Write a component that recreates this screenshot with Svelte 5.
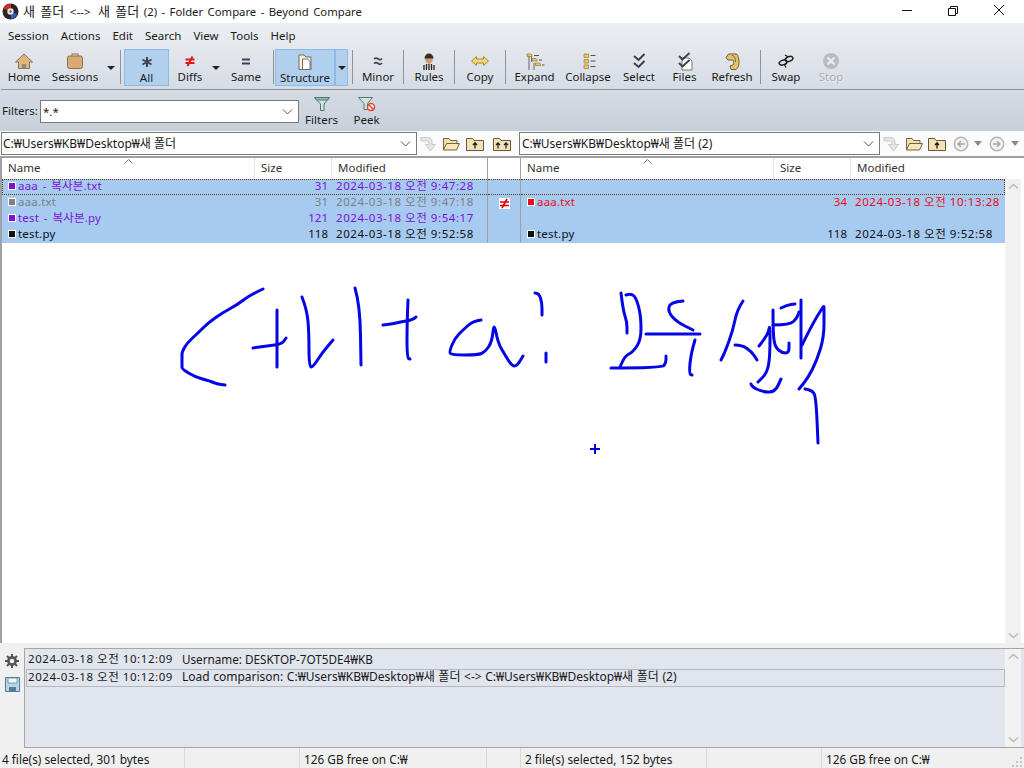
<script>
  const won = '\u20A9';
  const leftPath = `C:${won}Users${won}KB${won}Desktop${won}새 폴더`;
  const rightPath = `C:${won}Users${won}KB${won}Desktop${won}새 폴더 (2)`;

  const menus = ['Session', 'Actions', 'Edit', 'Search', 'View', 'Tools', 'Help'];

  const tools = [
    { label: 'Home', w: 42, icon: 'home' },
    { label: 'Sessions', w: 60, icon: 'case' },
    { arrow: 11 },
    { sep: 8 },
    { label: 'All', w: 45, icon: 'all', on: true },
    { label: 'Diffs', w: 42, icon: 'diffs' },
    { arrow: 10 },
    { label: 'Same', w: 50, icon: 'same' },
    { sep: 4 },
    { label: 'Structure', w: 60, icon: 'structure', on: true },
    { arrow: 13, on: true },
    { sep: 9 },
    { label: 'Minor', w: 42, icon: 'minor' },
    { sep: 9 },
    { label: 'Rules', w: 42, icon: 'rules' },
    { sep: 9 },
    { label: 'Copy', w: 42, icon: 'copy' },
    { sep: 9 },
    { label: 'Expand', w: 49, icon: 'expand' },
    { label: 'Collapse', w: 58, icon: 'collapse' },
    { label: 'Select', w: 44, icon: 'select' },
    { label: 'Files', w: 47, icon: 'files' },
    { label: 'Refresh', w: 48, icon: 'refresh' },
    { sep: 9 },
    { label: 'Swap', w: 42, icon: 'swap' },
    { label: 'Stop', w: 48, icon: 'stop', off: true }
  ];

  const leftRows = [
    { name: 'aaa - 복사본.txt', size: '31', date: '2024-03-18 오전 9:47:28', tone: 'orphan' },
    { name: 'aaa.txt', size: '31', date: '2024-03-18 오전 9:47:18', tone: 'older' },
    { name: 'test - 복사본.py', size: '121', date: '2024-03-18 오전 9:54:17', tone: 'orphan' },
    { name: 'test.py', size: '118', date: '2024-03-18 오전 9:52:58', tone: 'same' }
  ];
  const rightRows = [
    null,
    { name: 'aaa.txt', size: '34', date: '2024-03-18 오전 10:13:28', tone: 'newer' },
    null,
    { name: 'test.py', size: '118', date: '2024-03-18 오전 9:52:58', tone: 'same' }
  ];

  // pen strokes scribbled on top of the window
  const strokes = [
    '263 289 250 295 237 305 222 313 208 323 198 333 187 343 182 352 182 356 182 366 182 369 195 377 210 381 217 384 225 385',
    '253 348 267 346 282 344 286 338',
    '277 310 277 367',
    '302 297 307 310 309 333 309 367 313 367 322 353 333 340',
    '355 288 360 305 361 365',
    '383 325 392 324 400 322 412 320 416 317',
    '408 300 407 323 407 358 410 359',
    '481 320 473 321 463 330 455 338 449 352 452 355 478 355 485 352 492 342 494 322 498 343 505 355 512 366 517 366 523 356',
    '535 293 539 293 542 303 542 315',
    '546 353 546 362',
    '621 293 623 310 627 322 627 333',
    '626 295 632 293 637 300 641 317 641 340 633 352 625 356 620 367',
    '611 368 662 368 666 363 666 356',
    '683 301 670 302 668 312 677 322 693 330',
    '646 334 700 334',
    '695 340 691 353 689 374 692 375',
    '743 301 737 310 733 330 725 352 721 360',
    '735 345 742 345 752 352 757 360',
    '773 310 773 333 775 347 782 353 789 353 789 343',
    '759 346 768 335 770 323 770 357 767 373 758 382',
    '773 325 790 325 797 318 799 312',
    '781 308 787 305 795 304',
    '801 300 801 358',
    '802 345 813 323 823 307 824 306 824 310 824 337 817 360 808 378 799 389',
    '805 389 812 390 816 397 818 443',
    '751 384 752 387 763 392 775 392 781 379'
  ];

  // round the pen corners: quadratic through the midpoints
  function smooth(s) {
    const n = s.split(' ').map(Number);
    const pts = [];
    for (let i = 0; i < n.length; i += 2) pts.push([n[i], n[i + 1]]);
    let d = `M${pts[0][0]} ${pts[0][1]}`;
    for (let i = 1; i < pts.length - 1; i++) {
      const mx = (pts[i][0] + pts[i + 1][0]) / 2;
      const my = (pts[i][1] + pts[i + 1][1]) / 2;
      d += `Q${pts[i][0]} ${pts[i][1]} ${mx} ${my}`;
    }
    const last = pts[pts.length - 1];
    return d + `L${last[0]} ${last[1]}`;
  }
</script>

{#snippet folderOpen()}
  <svg width="18" height="16" viewBox="0 0 18 16">
    <path d="M1.500 14V2.500h5.500l1.500 2h6.500v3" fill="#f3dfae" stroke="#75633f"/>
    <path d="M1.500 14l3-6.500h13L14.500 14z" fill="#f8e7b8" stroke="#75633f"/>
  </svg>
{/snippet}

{#snippet folderUp(double)}
  <svg width="20" height="16" viewBox="0 0 20 16">
    <path d="M1.500 14.500V2.500h6l1.500 2h9.500v10z" fill="#f5e2b4" stroke="#67593d"/>
    {#if double}
      <path d="M6 12.500V7M4 9l2-2.200L8 9M14 12.500V7M12 9l2-2.200L16 9" fill="none" stroke="#1a1a1a" stroke-width="1.200"/>
    {:else}
      <path d="M10 12.500V7M8 9l2-2.200L12 9" fill="none" stroke="#1a1a1a" stroke-width="1.300"/>
    {/if}
  </svg>
{/snippet}

{#snippet copyArrow()}
  <svg width="18" height="16" viewBox="0 0 18 16">
    <path d="M1 1.500h6.500c3 0 4.500 2 4.500 4.500v2.500h3.500L10.500 15 5.500 8.500H9V6.500C9 5.500 8.500 5 7.500 5H1z" fill="#e6e6e6" stroke="#c8c8c8"/>
  </svg>
{/snippet}

{#snippet navCircle(dir)}
  <svg width="16" height="16" viewBox="0 0 16 16">
    <circle cx="8" cy="8" r="6.700" fill="#f4f4f4" stroke="#b5b5b5" stroke-width="1.500"/>
    {#if dir === 'back'}
      <path d="M12 8H5M8 5L5 8l3 3" fill="none" stroke="#a8a8a8" stroke-width="1.500"/>
    {:else}
      <path d="M4 8h7M8 5l3 3-3 3" fill="none" stroke="#a8a8a8" stroke-width="1.500"/>
    {/if}
  </svg>
{/snippet}

{#snippet chevron(dir)}
  <svg class="chev" width="11" height="7" viewBox="0 0 11 7">
    {#if dir === 'up'}
      <path d="M1 5.500l4.500-4 4.500 4" fill="none" stroke="#b9b9b9" stroke-width="1.500"/>
    {:else}
      <path d="M1 1.500l4.500 4 4.500-4" fill="none" stroke="#b9b9b9" stroke-width="1.500"/>
    {/if}
  </svg>
{/snippet}

{#snippet comboChevron()}
  <svg width="11" height="6" viewBox="0 0 11 6">
    <path d="M1 .5l4.500 4.500L10 .5" fill="none" stroke="#555"/>
  </svg>
{/snippet}

{#snippet toolIcon(name)}
  <svg width="24" height="20" viewBox="0 0 24 20">
    {#if name === 'home'}
      <path d="M12 3L3.500 11h3v6.500h11V11h3z" fill="#dcb67c" stroke="#85705a"/>
      <path d="M10 17.500v-4.500h4v4.500" fill="#9a8a74"/>
    {:else if name === 'case'}
      <rect x="9" y="3" width="6" height="3" fill="none" stroke="#8a6a3e"/>
      <rect x="4.500" y="5" width="15" height="12.500" rx="2" fill="#d9ab72" stroke="#8f6f45"/>
    {:else if name === 'all'}
      <path d="M12 5v10M7.500 7.500l9 5M16.500 7.500l-9 5" stroke="#3c4450" stroke-width="2" fill="none"/>
    {:else if name === 'diffs'}
      <path d="M7.500 8.500h9M7.500 12h9" stroke="#e01818" stroke-width="1.800"/>
      <path d="M14.500 5.500L9.500 15" stroke="#e01818" stroke-width="2"/>
    {:else if name === 'same'}
      <path d="M8 8.500h8M8 12.500h8" stroke="#3c4450" stroke-width="2"/>
    {:else if name === 'structure'}
      <path d="M6 3h5l2 2h5v12.500H6z" fill="#fbf1d2" stroke="#6d6d6d"/>
      <path d="M9.500 7h5l2.500 2.500v8h-7.500z" fill="#fff" stroke="#6d6d6d"/>
    {:else if name === 'minor'}
      <path d="M8 8c1.700-1.700 3-1 4.300 0s2.700 1 3.700-.5M8 12.500c1.700-1.700 3-1 4.300 0s2.700 1 3.700-.5" fill="none" stroke="#3c4450" stroke-width="1.600"/>
    {:else if name === 'rules'}
      <path d="M5 19c0-5 3-6.500 7-6.500s7 1.500 7 6.500z" fill="#e9e4dc"/>
      <path d="M7 19v-5M9.500 19v-6M12 19v-6.500M14.500 19v-6M17 19v-5" stroke="#222" stroke-width="1.300"/>
      <circle cx="12" cy="8.500" r="3.800" fill="#d99a6c"/>
      <path d="M7.500 7.500h9c0-3-2-5-4.500-5s-4.500 2-4.500 5z" fill="#33302d"/>
    {:else if name === 'copy'}
      <path d="M3.500 10l5-4.500V8h7V5.500l5 4.500-5 4.500V12h-7v2.500z" fill="#f7d768" stroke="#a08a3c"/>
    {:else if name === 'expand'}
      <path d="M6 5v14M8.500 5v6M8.500 9h3M11 12v7" stroke="#666" fill="none"/>
      <path d="M4 3h4l1 1v1.500H4zM9 7.500h4l1 1V10H9zM12.500 12h4l1 1v1.500h-5z" fill="#f0c75e" stroke="#8f7a3a" stroke-width=".7"/>
      <path d="M11 4.500h5M16 9h3M19 14h2.500" stroke="#555"/>
    {:else if name === 'collapse'}
      <path d="M8 3h4.500v3.500H8zM8 8.500h4.500V12H8zM8 14h4.500v3.500H8z" fill="#f0c75e" stroke="#8f7a3a" stroke-width=".7"/>
      <path d="M14.500 4.500h5M14.500 10h5M14.500 15.500h5" stroke="#555"/>
    {:else if name === 'select'}
      <path d="M7 5l4.500 4L17.500 3" fill="none" stroke="#3b4048" stroke-width="2"/>
      <path d="M7 12l4.500 4 6-6" fill="none" stroke="#3b4048" stroke-width="2"/>
    {:else if name === 'files'}
      <path d="M9 7h7l3 3v9H9z" fill="#fff" stroke="#777"/>
      <path d="M6 5l3.500 3.500L16.500 2M6 12l3.500 3.500L16.500 9" fill="none" stroke="#3b4048" stroke-width="1.800"/>
    {:else if name === 'refresh'}
      <path d="M8.500 3h8c2 2 2.500 5 2.500 8.500s-1 5.500-3 7h-5l-1-3.500 3-1c1-2 1-3 0-5H8L6 6.500z" fill="#e6c16c" stroke="#6f5f38"/>
      <path d="M12 4.500c2.500 0 3.500 3 3.500 6.500" fill="none" stroke="#6f5f38"/>
    {:else if name === 'swap'}
      <ellipse cx="9" cy="11.500" rx="4" ry="2.300" transform="rotate(-20 9 11.500)" fill="none" stroke="#1e1e1e" stroke-width="1.500"/>
      <ellipse cx="15" cy="8" rx="4" ry="2.300" transform="rotate(-20 15 8)" fill="none" stroke="#1e1e1e" stroke-width="1.500"/>
      <path d="M11 4l2.500 1.500L12 8M13 12l-2.500 2 1.500 2.500" fill="none" stroke="#1e1e1e" stroke-width="1.200"/>
    {:else if name === 'stop'}
      <circle cx="12" cy="10" r="8" fill="#b8bcc2"/>
      <path d="M8.500 6.500l7 7M15.500 6.500l-7 7" stroke="#e8eaee" stroke-width="2.400"/>
    {/if}
  </svg>
{/snippet}

{#snippet pane(rows, side)}
  <div class="pane {side}">
    <div class="head">
      <div class="col name">Name
        <svg class="sort" width="9" height="5" viewBox="0 0 9 5"><path d="M.5 4.500l4-4 4 4" fill="none" stroke="#808080"/></svg>
      </div>
      <div class="col size">Size</div>
      <div class="col modified">Modified</div>
    </div>
    {#each rows as row, i}
      <div class="row" class:focus={i === 0}>
        {#if row}
          <div class="cell name {row.tone}"><span class="mark"></span>{row.name}</div>
          <div class="cell size {row.tone}">{row.size}</div>
          <div class="cell modified stamp {row.tone}">{row.date}</div>
        {/if}
      </div>
    {/each}
  </div>
{/snippet}

<div class="window">
  <header class="title">
    <svg class="logo" width="17" height="17" viewBox="0 0 17 17">
      <circle cx="8.500" cy="8.500" r="8" fill="#2a2522"/>
      <path d="M1.500 6A7.500 7.500 0 0 1 9 1v4a3.500 3.500 0 0 0-3 2z" fill="#d42a20"/>
      <path d="M15 11a7.500 7.500 0 0 1-6 5v-4a3.500 3.500 0 0 0 2.500-2z" fill="#2a62c8"/>
      <circle cx="8.500" cy="8.500" r="3.200" fill="#ece9e2"/>
      <circle cx="8.500" cy="8.500" r="1.200" fill="#6a6460"/>
    </svg>
    <span class="title-text"><span class="ko">새 폴더</span> <span class="link">&lt;--&gt;</span> <span class="ko">새 폴더</span> <span class="tail">(2) - Folder Compare - Beyond Compare</span></span>
    <div class="caption">
      <svg width="46" height="24" viewBox="0 0 46 24"><path d="M18 10.500h10" stroke="#111"/></svg>
      <svg width="46" height="24" viewBox="0 0 46 24"><path d="M18.500 8.500h7v7h-7zM20.500 8.500v-2h7v7h-2" fill="none" stroke="#111"/></svg>
      <svg width="46" height="24" viewBox="0 0 46 24"><path d="M18 5l10 10M28 5L18 15" stroke="#111"/></svg>
    </div>
  </header>

  <div class="chrome">
    <nav class="menu">
      {#each menus as m}<span>{m}</span>{/each}
    </nav>

    <div class="toolbar">
      {#each tools as t}
        {#if t.sep}
          <div class="sep" style="width:{t.sep}px"><i></i></div>
        {:else if t.arrow}
          <div class="drop" class:on={t.on} style="width:{t.arrow}px"><b></b></div>
        {:else}
          <div class="tool" class:on={t.on} class:off={t.off} style="width:{t.w}px">
            {@render toolIcon(t.icon)}
            <span>{t.label}</span>
          </div>
        {/if}
      {/each}
    </div>

    <div class="filters">
      <label for="flt">Filters:</label>
      <div class="combo filter-box">
        <input id="flt" value="*.*" />
        {@render comboChevron()}
      </div>
      <div class="tool filter-tool">
        <svg width="20" height="16" viewBox="0 0 20 16">
          <path d="M2.500 1.500h15L12 8v6.500H8.500V8z" fill="#cfe7e4" stroke="#52746f"/>
          <path d="M2.500 1.500h15l-2 2.500h-11z" fill="#8fc3bc" stroke="#52746f"/>
        </svg>
        <span>Filters</span>
      </div>
      <div class="tool filter-tool">
        <svg width="20" height="16" viewBox="0 0 20 16">
          <path d="M1.500 1.500h14L10.500 7.500v6H7V7.500z" fill="#cfe7e4" stroke="#52746f"/>
          <circle cx="14" cy="11" r="3.500" fill="#fff" stroke="#e0452f" stroke-width="1.500"/>
          <path d="M11.500 8.500l5 5" stroke="#e0452f" stroke-width="1.500"/>
        </svg>
        <span>Peek</span>
      </div>
    </div>
  </div>

  <div class="paths">
    <div class="combo path left-path">
      <span class="path-text">{leftPath}</span>
      {@render comboChevron()}
    </div>
    <div class="path-tools left-tools">
      {@render copyArrow()}
      <span class="g4"></span>
      {@render folderOpen()}
      <span class="g5"></span>
      {@render folderUp(false)}
      <span class="g7"></span>
      {@render folderUp(true)}
    </div>
    <div class="combo path right-path">
      <span class="path-text">{rightPath}</span>
      {@render comboChevron()}
    </div>
    <div class="path-tools right-tools">
      {@render copyArrow()}
      <span class="g4"></span>
      {@render folderOpen()}
      <span class="g4"></span>
      {@render folderUp(false)}
      <span class="g6"></span>
      {@render navCircle('back')}
      <span class="g5"></span>
      <b class="tiny"></b>
      <span class="g7"></span>
      {@render navCircle('forward')}
      <span class="g6"></span>
      <b class="tiny"></b>
    </div>
  </div>

  <main class="compare">
    <div class="panes">
      {@render pane(leftRows, 'left')}
      <div class="gutter">
        <div class="gutter-head"></div>
        <div class="gutter-row focus"></div>
        <div class="gutter-row">
          <svg width="11" height="11" viewBox="0 0 11 11">
            <rect width="11" height="11" fill="#fff"/>
            <path d="M1 4h9M1 7.500h9M8 1L3 10" stroke="#e00000" stroke-width="1.600"/>
          </svg>
        </div>
        <div class="gutter-row"></div>
        <div class="gutter-row"></div>
      </div>
      {@render pane(rightRows, 'right')}
      <div class="scroll">
        <div class="scroll-corner"></div>
        <div class="scroll-track">
          {@render chevron('up')}
          {@render chevron('down')}
        </div>
      </div>
    </div>
  </main>

  <section class="logbar">
    <div class="log-tools">
      <svg width="14" height="14" viewBox="0 0 14 14">
        <circle cx="7" cy="7" r="3.600" fill="none" stroke="#555" stroke-width="2.600"/>
        <path d="M7 0v3M7 11v3M0 7h3M11 7h3M2 2l2 2M10 10l2 2M12 2l-2 2M4 10l-2 2" stroke="#555" stroke-width="2"/>
      </svg>
      <svg width="15" height="15" viewBox="0 0 15 15">
        <path d="M.5.500h14v14H.5z" fill="#b9d4e4" stroke="#4f7f98"/>
        <path d="M3 1h9v5H3z" fill="#f2f6f8" stroke="#4f7f98" stroke-width=".7"/>
        <path d="M4 10h7v4.500H4z" fill="#4f7f98"/>
      </svg>
    </div>
    <div class="log">
      <div class="log-lines">
        <div class="log-line"><span class="stamp">2024-03-18 오전 10:12:09</span><span class="msg">Username: DESKTOP-7OT5DE4{won}KB</span></div>
        <div class="log-line current"><span class="stamp">2024-03-18 오전 10:12:09</span><span class="msg">Load comparison: {leftPath} &lt;-&gt; {rightPath}</span></div>
      </div>
      <div class="scroll-track log-scroll">
        {@render chevron('up')}
        {@render chevron('down')}
      </div>
    </div>
  </section>

  <footer class="status">
    <span class="s1">4 file(s) selected, 301 bytes</span>
    <span class="s2"></span>
    <span class="s3">126 GB free on C:{won}</span>
    <span class="s4"></span>
    <span class="s5">2 file(s) selected, 152 bytes</span>
    <span class="s6"></span>
    <span class="s7">126 GB free on C:{won}</span>
    <svg class="grip" width="12" height="12" viewBox="0 0 12 12">
      <path d="M9 2h2v2H9zM5 6h2v2H5zM9 6h2v2H9zM1 10h2v2H1zM5 10h2v2H5zM9 10h2v2H9z" fill="#c4c4c4"/>
    </svg>
  </footer>

  <svg class="ink" width="1024" height="768" viewBox="0 0 1024 768">
    {#each strokes as s}
      <path d={smooth(s)} />
    {/each}
    <path class="cross" d="M590 449h10M595 444v10" />
  </svg>
</div>

<style>
  :global(body) {
    margin: 0;
    overflow: hidden;
  }
  .window {
    position: relative;
    width: 1024px;
    height: 768px;
    display: flex;
    flex-direction: column;
    background: #fff;
    font-family: "Noto Sans", "Noto Sans CJK KR", sans-serif;
    font-size: 11.5px;
    line-height: 16px;
    color: #1a1a1a;
    overflow: hidden;
  }

  .title {
    height: 23px;
    flex: none;
    display: flex;
    align-items: center;
    padding-left: 2px;
    background: #fff;
  }
  .title-text {
    margin-left: 4px;
    white-space: nowrap;
    font-size: 11.6px;
    word-spacing: 1.5px;
  }
  .ko {
    font-size: 13px;
    word-spacing: 2px;
  }
  .link {
    margin: 0 3px 0 1px;
  }
  .tail {
    font-size: 11.3px;
  }
  .caption {
    margin-left: auto;
    display: flex;
    padding-right: 2px;
  }

  .chrome {
    height: 108px;
    background: linear-gradient(#eceff3, #c8d0da);
    flex: none;
  }
  .menu {
    height: 24px;
    display: flex;
    align-items: center;
    gap: 12px;
    padding: 2px 0 0 8px;
    box-sizing: border-box;
  }
  .toolbar {
    height: 40px;
    display: flex;
    align-items: stretch;
    padding: 2px 0 0 2px;
    border-bottom: 1px solid #8f949b;
    margin-left: 1px;
  }
  .tool {
    flex: none;
    display: flex;
    flex-direction: column;
    align-items: center;
    box-sizing: border-box;
    height: 37px;
    padding-top: 2px;
  }
  .tool span {
    line-height: 15px;
    white-space: nowrap;
    margin-top: -2px;
  }
  .tool.on, .drop.on {
    background: #b0d0ee;
    border: 1px solid #8ebbe6;
    box-sizing: border-box;
  }
  .tool.on {
    padding-top: 2px;
  }
  .tool.off span {
    color: #a8acb2;
    text-shadow: 1px 1px 0 #eef0f3;
  }
  .sep {
    flex: none;
    display: flex;
    justify-content: center;
    height: 34px;
    margin-top: 1px;
  }
  .sep i {
    width: 1px;
    background: #8f949b;
  }
  .drop {
    flex: none;
    height: 37px;
    display: flex;
    align-items: center;
    justify-content: center;
  }
  .drop b {
    width: 0;
    height: 0;
    border-left: 4px solid transparent;
    border-right: 4px solid transparent;
    border-top: 4px solid #222;
  }

  .filters {
    display: flex;
    align-items: flex-start;
    height: 42px;
    padding-left: 2px;
  }
  .filters label {
    margin-top: 13px;
    width: 38px;
  }
  .combo {
    display: flex;
    align-items: center;
    background: #fff;
    border: 1px solid #7a7a7a;
    box-sizing: border-box;
    padding-right: 5px;
  }
  .filter-box {
    width: 259px;
    height: 23px;
    margin-top: 10px;
  }
  .filter-box input {
    flex: 1;
    min-width: 0;
    border: 0;
    outline: 0;
    padding: 0 2px;
    font: inherit;
    background: transparent;
    color: inherit;
  }
  .filter-tool {
    width: 45px;
    height: 40px;
    padding-top: 6px;
  }
  .filter-tool span {
    margin-top: 0;
  }

  .paths {
    height: 25px;
    flex: none;
    display: flex;
    align-items: center;
    background: #fbfbfb;
    padding-left: 1px;
    box-sizing: border-box;
    font-size: 12px;
  }
  .path {
    height: 23px;
    flex: none;
  }
  .left-path {
    width: 416px;
  }
  .left-path .path-text {
    padding-left: 1px;
  }
  .right-path {
    width: 361px;
  }
  .path-text {
    flex: 1;
    padding-left: 2px;
    white-space: nowrap;
    overflow: hidden;
  }
  .path-tools {
    display: flex;
    align-items: center;
    flex: none;
    padding-left: 3px;
    box-sizing: border-box;
  }
  .left-tools {
    width: 102px;
  }
  .g4 { width: 4px; }
  .g5 { width: 5px; }
  .g6 { width: 6px; }
  .g7 { width: 7px; }
  .tiny {
    width: 0;
    height: 0;
    border-left: 4px solid transparent;
    border-right: 4px solid transparent;
    border-top: 5px solid #8c8c8c;
  }

  .compare {
    flex: 1;
    min-height: 0;
    border-top: 2px solid #a0a0a0;
    border-left: 2px solid #a0a0a0;
    background: #fff;
  }
  .panes {
    display: flex;
    align-items: stretch;
    height: 100%;
  }
  .pane {
    flex: none;
  }
  .pane.left {
    width: 485px;
  }
  .pane.right {
    width: 484px;
  }
  .head {
    height: 21px;
    display: flex;
    background: #fff;
    line-height: 20px;
    color: #333;
  }
  .col {
    box-sizing: border-box;
    border-right: 1px solid #e5e5e5;
    padding-left: 6px;
    position: relative;
  }
  .name {
    width: 253px;
  }
  .size {
    width: 77px;
  }
  .modified {
    width: 155px;
  }
  .pane.right .modified {
    width: 154px;
  }
  .col.modified {
    border-right: 0;
  }
  .sort {
    position: absolute;
    left: 122px;
    top: 1px;
  }
  .row {
    position: relative;
    height: 16px;
    display: flex;
    background: #a6caf0;
    white-space: nowrap;
  }
  .row.focus::before, .gutter-row.focus::before {
    content: "";
    position: absolute;
    inset: 0;
    border-top: 1px dotted #5a3a10;
    border-bottom: 1px dotted #5a3a10;
    pointer-events: none;
  }
  .pane.left .row.focus::before {
    border-left: 1px dotted #5a3a10;
  }
  .pane.right .row.focus::before {
    border-right: 1px dotted #5a3a10;
  }
  .cell {
    box-sizing: border-box;
    line-height: 13px;
    overflow: hidden;
  }
  .cell.name {
    padding-left: 6px;
    display: flex;
    align-items: flex-start;
    word-spacing: 1.500px;
    letter-spacing: .2px;
    white-space: pre;
  }
  .cell.size {
    text-align: right;
    padding-right: 4px;
  }
  .cell.modified {
    padding-left: 4px;
  }
  .stamp {
    font-size: 11.5px;
    letter-spacing: .55px;
  }
  .mark {
    width: 6px;
    height: 6px;
    background: currentColor;
    border: 1px solid #fff;
    margin: 3px 2px 0 0;
    flex: none;
  }
  .orphan {
    color: #7d12d6;
  }
  .older {
    color: #808080;
  }
  .newer {
    color: #f00a14;
  }
  .same {
    color: #111;
  }

  .gutter {
    width: 34px;
    flex: none;
  }
  .gutter-head, .gutter-row {
    box-sizing: border-box;
    border-left: 1px solid #a0a0a0;
    border-right: 1px solid #a0a0a0;
  }
  .gutter-head {
    height: 21px;
  }
  .gutter-row {
    position: relative;
    height: 16px;
    background: #a6caf0;
    display: flex;
    align-items: center;
    justify-content: center;
  }
  .scroll {
    width: 16px;
    flex: none;
    display: flex;
    flex-direction: column;
  }
  .scroll-corner {
    height: 21px;
  }
  .scroll-track {
    flex: 1;
    background: #f1f1f1;
    display: flex;
    flex-direction: column;
    justify-content: space-between;
    align-items: center;
    padding: 4px 0;
    box-sizing: border-box;
  }

  .logbar {
    height: 105px;
    flex: none;
    display: flex;
    background: #f0f0f0;
    padding-top: 5px;
    box-sizing: border-box;
  }
  .log-tools {
    width: 24px;
    flex: none;
    display: flex;
    flex-direction: column;
    align-items: center;
    gap: 9px;
    padding-top: 6px;
    box-sizing: border-box;
  }
  .log {
    flex: 1;
    display: flex;
    background: #e1e5ee;
    border: 1px solid #a6a6a6;
    border-right: 0;
    box-sizing: border-box;
    padding-right: 2px;
  }
  .log-lines {
    width: 980px;
    flex: none;
    padding-top: 2px;
    white-space: nowrap;
  }
  .log-line {
    height: 17px;
    line-height: 16px;
    padding-left: 3px;
    display: flex;
  }
  .log-line.current {
    outline: 1px solid #b4b8c0;
    outline-offset: -1px;
    height: 18px;
    margin-top: 1px;
    margin-left: 1px;
    padding-left: 2px;
  }
  .msg {
    margin-left: 9px;
    font-size: 11.7px;
  }
  .current .msg {
    font-size: 12px;
    word-spacing: .5px;
  }
  .log-scroll {
    width: 16px;
    flex: none;
  }

  .status {
    position: relative;
    height: 20px;
    flex: none;
    display: flex;
    background: #f0f0f0;
    line-height: 22px;
    white-space: nowrap;
    font-size: 11.8px;
  }
  .status span {
    box-sizing: border-box;
    border-right: 1px solid #d9d9d9;
    padding-left: 2px;
    flex: none;
  }
  .s1 { width: 185px; }
  .s2 { width: 115px; }
  .status .s3 { width: 187px; padding-left: 4px; }
  .s4 { width: 34px; }
  .status .s5 { width: 186px; padding-left: 4px; }
  .s6 { width: 115px; }
  .status .s7 { border-right: 0; padding-left: 4px; width: 150px; }
  .grip {
    position: absolute;
    right: 1px;
    bottom: 1px;
  }

  .ink {
    position: absolute;
    left: 0;
    top: 0;
    pointer-events: none;
  }
  .ink path {
    fill: none;
    stroke: #0505e6;
    stroke-width: 3;
    stroke-linecap: round;
    stroke-linejoin: round;
  }
  .ink .cross {
    stroke-width: 2;
    stroke-linecap: butt;
  }
  .chev {
    display: block;
  }
</style>
